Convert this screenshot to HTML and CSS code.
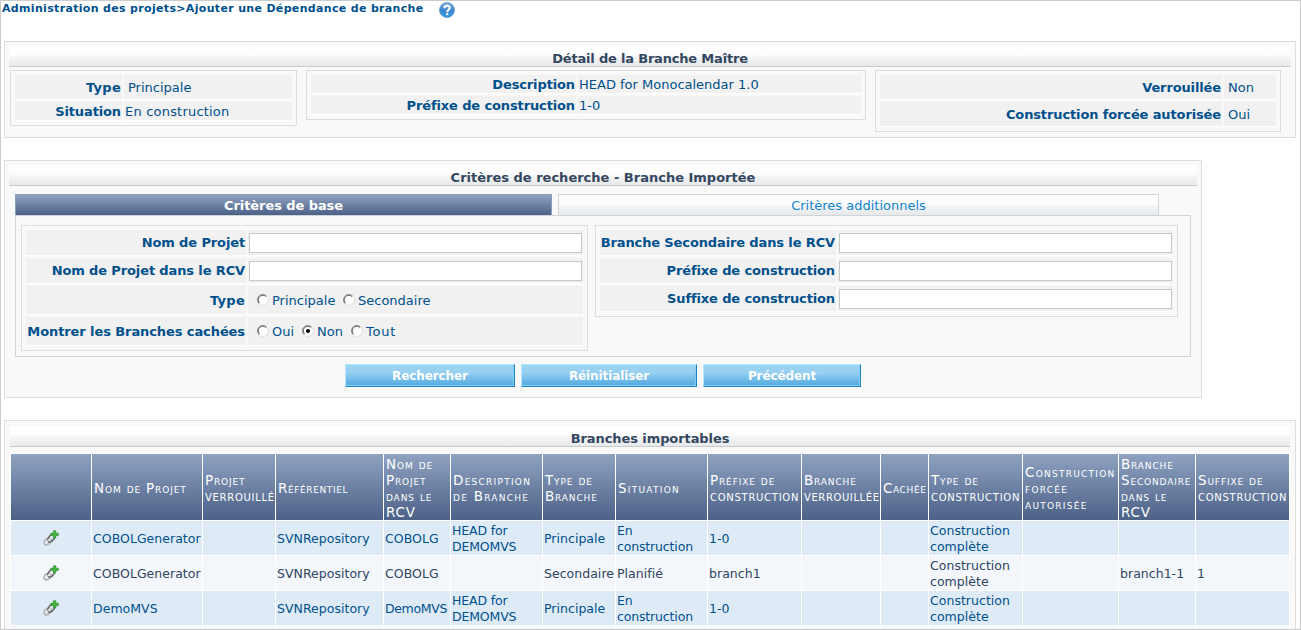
FILE: index.html
```html
<!DOCTYPE html>
<html lang="fr">
<head>
<meta charset="utf-8">
<title>Ajouter une Dépendance de branche</title>
<link rel="stylesheet" href="styles.css">
</head>
<body>
<svg class="defs" width="0" height="0">
  <defs>
    <linearGradient id="ball" x1="0" y1="0" x2="0" y2="1">
      <stop offset="0" stop-color="#86b6e2"/><stop offset=".5" stop-color="#3d86cc"/><stop offset="1" stop-color="#2fa0e4"/>
    </linearGradient>
    <symbol id="link-add" viewBox="0 0 16 16">
      <ellipse cx="4.600" cy="11.400" rx="4" ry="2.700" transform="rotate(-42 4.600 11.400)" fill="none" stroke="#b4b4b4" stroke-width="1.700"/>
      <ellipse cx="8.400" cy="8" rx="4.700" ry="2.600" transform="rotate(-55 8.400 8)" fill="none" stroke="#66686a" stroke-width="1.500"/>
      <path d="M4.400 11.400l3.600-4" stroke="#e6e6e6" stroke-width="1.200"/>
      <path d="M10.400.8h2.400v2.400h2.500v2.300h-2.500V8h-2.400V5.500H8V3.200h2.400z" fill="#48b53c" stroke="#2a9129" stroke-width=".7"/>
    </symbol>
    <symbol id="radio" viewBox="0 0 12 12">
      <circle cx="6" cy="6" r="5" fill="#fff"/>
      <path d="M9.700 2A5.300 5.300 0 0 0 2 9.700" fill="none" stroke="#8a8a8a" stroke-width=".9"/>
      <path d="M9 2.600A4.500 4.500 0 0 0 2.600 9" fill="none" stroke="#404040" stroke-width=".8"/>
      <path d="M9.900 2.200A5.300 5.300 0 0 1 2.200 9.900" fill="none" stroke="#dcdad5" stroke-width=".8"/>
    </symbol>
  </defs>
</svg>
<div class="frame">
  <div class="crumb">
    <span>Administration des projets&gt;Ajouter une Dépendance de branche</span>
    <svg width="16" height="16" viewBox="0 0 16 16"><circle cx="8" cy="8" r="7.500" fill="url(#ball)" stroke="#5b8fc4" stroke-width=".8"/><path d="M5.400 6.200c0-3.400 5.300-3.300 5.300-.3 0 1.900-2.500 2-2.500 4" fill="none" stroke="#fff" stroke-width="2"/><circle cx="8.200" cy="12" r="1.200" fill="#fff"/></svg>
  </div>

  <section class="panel detail">
    <h2>Détail de la Branche Maître</h2>
    <div class="boxes">
      <div class="box low d1">
        <b class="h25 type">Type</b><span class="in">Principale</span>
        <b class="h19">Situation</b><span class="wide">En construction</span>
      </div>
      <div class="box low d2">
        <b class="h19">Description</b><span>HEAD for Monocalendar 1.0</span>
        <b class="h19">Préfixe de construction</b><span>1-0</span>
      </div>
      <div class="box low d3">
        <b class="h25">Verrouillée</b><span class="in">Non</span>
        <b class="h25">Construction forcée autorisée</b><span class="in">Oui</span>
      </div>
    </div>
  </section>

  <section class="panel search">
    <h2 class="title-wide">Critères de recherche - Branche Importée</h2>
    <div class="tabs">
      <div class="tab active">Critères de base</div>
      <div class="tab">Critères additionnels</div>
    </div>
    <div class="pane">
      <div class="box f1">
        <b class="h26">Nom de Projet</b><span><input type="text"></span>
        <b class="h26">Nom de Projet dans le RCV</b><span><input type="text"></span>
        <b class="h29 type">Type</b>
        <span class="radios">
          <label class="w86"><svg width="12" height="12"><use href="#radio"/></svg>Principale</label>
          <label><svg width="12" height="12"><use href="#radio"/></svg>Secondaire</label>
        </span>
        <b class="h29 close">Montrer les Branches cachées</b>
        <span class="radios">
          <label class="w45"><svg width="12" height="12"><use href="#radio"/></svg>Oui</label>
          <label class="w49"><svg width="12" height="12"><use href="#radio"/><circle cx="6" cy="6" r="2" fill="#000"/></svg>Non</label>
          <label class="tout"><svg width="12" height="12"><use href="#radio"/></svg>Tout</label>
        </span>
      </div>
      <div class="box f2">
        <b class="h26">Branche Secondaire dans le RCV</b><span><input type="text"></span>
        <b class="h26">Préfixe de construction</b><span><input type="text"></span>
        <b class="h26">Suffixe de construction</b><span><input type="text"></span>
      </div>
    </div>
    <div class="buttons">
      <button class="w170">Rechercher</button>
      <button class="w176">Réinitialiser</button>
      <button class="w158">Précédent</button>
    </div>
  </section>

  <section class="panel results">
    <h2 class="title-mid">Branches importables</h2>
    <table>
      <colgroup><col class="c80"><col class="c110"><col class="c72"><col class="c107"><col class="c66"><col class="c91"><col class="c72"><col class="c91"><col class="c93"><col class="c78"><col class="c47"><col class="c93"><col class="c95"><col class="c76"><col class="c93"></colgroup>
      <thead>
        <tr>
          <th></th>
          <th>Nom de Projet</th>
          <th>Projet<br><i>verrouillé</i></th>
          <th class="tight">Référentiel</th>
          <th>Nom de<br>Projet<br>dans le<br>RCV</th>
          <th class="loose">Description<br>de Branche</th>
          <th>Type de<br>Branche</th>
          <th class="loose">Situation</th>
          <th>Préfixe de<br><i>construction</i></th>
          <th>Branche<br><i class="e">verrouillée</i></th>
          <th class="tight">Cachée</th>
          <th>Type de<br><i>construction</i></th>
          <th class="loose">Construction<br>forcée<br>autorisée</th>
          <th>Branche<br>Secondaire<br>dans le<br>RCV</th>
          <th>Suffixe de<br><i>construction</i></th>
        </tr>
      </thead>
      <tbody>
        <tr><td class="ico"><svg width="16" height="16"><use href="#link-add"/></svg></td><td>COBOLGenerator</td><td></td><td>SVNRepository</td><td>COBOLG</td><td class="snug">HEAD for<br>DEMOMVS</td><td>Principale</td><td class="snug">En<br>construction</td><td>1-0</td><td></td><td></td><td>Construction<br>complète</td><td></td><td></td><td></td></tr>
        <tr><td class="ico"><svg width="16" height="16"><use href="#link-add"/></svg></td><td>COBOLGenerator</td><td></td><td>SVNRepository</td><td>COBOLG</td><td></td><td>Secondaire</td><td>Planifié</td><td>branch1</td><td></td><td></td><td>Construction<br>complète</td><td></td><td>branch1-1</td><td>1</td></tr>
        <tr><td class="ico"><svg width="16" height="16"><use href="#link-add"/></svg></td><td>DemoMVS</td><td></td><td>SVNRepository</td><td class="mvs">DemoMVS</td><td class="snug">HEAD for<br>DEMOMVS</td><td>Principale</td><td class="snug">En<br>construction</td><td>1-0</td><td></td><td></td><td>Construction<br>complète</td><td></td><td></td><td></td></tr>
        <tr><td></td><td></td><td></td><td></td><td></td><td></td><td></td><td></td><td></td><td></td><td></td><td></td><td></td><td></td><td></td></tr>
      </tbody>
    </table>
  </section>
</div>
</body>
</html>
```

FILE: styles.css
```css
* { box-sizing: border-box; }
body { margin: 0; background: #fff; color: #00508c; font: 13px/16px Verdana, "DejaVu Sans", sans-serif; overflow: hidden; }
.defs { position: absolute; }
.frame { width: 1301px; height: 630px; border: 1px solid #ccc; padding-left: 3px; overflow: hidden; }

.crumb { display: flex; height: 40px; margin-left: -2px; gap: 15px; font-size: 11px; font-weight: bold; white-space: nowrap; }
.crumb span { width: 422px; letter-spacing: .33px; }
.crumb svg { margin-top: 1px; }

.panel { border: 1px solid #ddd; background: #f9f9f9; padding: 4px; }
.panel h2 { margin: 0; height: 21px; padding-top: 5px; border-bottom: 1px solid #c8cacd; background: linear-gradient(#fff 0, #fdfdfd 45%, #f3f4f6 58%, #e8e9eb 100%); color: #34475f; font-size: 13px; line-height: 16px; text-align: center; letter-spacing: -.19px; }
.panel h2.title-wide { letter-spacing: 0; }
.panel h2.title-mid { letter-spacing: -.08px; }

.detail { width: 1292px; height: 97px; }
.boxes { display: grid; grid-template-columns: 287px 560px 406px; column-gap: 9px; align-items: start; padding: 3px 0 0 1px; }
.box { display: grid; gap: 2px; padding: 4px; border: 1px solid #ddd; }
.box > * { display: flex; align-items: center; background: #f1f1f1; border-bottom: 1px solid #fff; white-space: nowrap; }
.box.low > *, .box > .h29, .box > .radios { padding-top: 2px; }
.box > b { justify-content: flex-end; padding-right: 1px; letter-spacing: -.125px; }
.box > .type { letter-spacing: .3px; }
.box > span { padding-left: 1px; }
.box > .in { padding-left: 4px; }
.box > .wide { letter-spacing: .2px; }
.box > .close { letter-spacing: -.09px; }
.h19 { height: 19px; }
.h25 { height: 25px; }
.h26 { height: 26px; }
.h29 { height: 29px; }
.d1 { grid-template-columns: 107px 168px; }
.d2 { grid-template-columns: 265px 283px; }
.d3 { grid-template-columns: 342px 52px; }

.search { width: 1198px; height: 238px; margin-top: 22px; }
.tabs { display: grid; grid-template-columns: 537px 601px; column-gap: 6px; height: 21px; margin: 8px 0 0 6px; }
.tab { height: 21px; border: 1px solid #d0d6d8; border-bottom: 0; background: linear-gradient(#fff 0, #fcfcfc 48%, #f2f3f5 60%, #e6e8ea 100%); color: #0f83cf; line-height: 21px; text-align: center; }
.tab.active { border-color: #8c9fbe; background: linear-gradient(#8fa2c1, #4b6186); color: #fff; font-weight: bold; letter-spacing: -.08px; }
.pane { display: flex; align-items: flex-start; gap: 7px; width: 1176px; height: 142px; margin-left: 6px; padding: 9px 5px; border: 1px solid #d0d6d8; }
.f1 { width: 567px; grid-template-columns: 220px 335px; }
.f2 { width: 583px; grid-template-columns: 236px 335px; }
input { width: 333px; height: 20px; padding: 0; border: 1px solid #c8c8c8; background: #fff; }
.box > .radios { padding-left: 9px; }
.radios label { display: flex; align-items: center; gap: 3px; }
.radios svg { margin-bottom: 2px; }
.w86 { width: 86px; }
.w45 { width: 45px; }
.w49 { width: 49px; }
.tout { letter-spacing: .8px; }

.buttons { display: flex; gap: 6px; padding: 7px 0 0 336px; }
button { height: 23px; padding: 1px 0 0; border: 1px solid; border-color: #b4e8fb #1d86c6 #1d86c6 #b4e8fb; box-shadow: inset -1px -1px #8accf0; background: linear-gradient(#9dd3f2 0, #97d0f1 35%, #50a9df 100%); color: #fff; font: bold 12px/16px Verdana, "DejaVu Sans", sans-serif; letter-spacing: -.1px; }
.w170 { width: 170px; }
.w176 { width: 176px; }
.w158 { width: 158px; }

.results { width: 1292px; height: 240px; margin-top: 22px; padding: 5px 4px 0 5px; }
.results h2 { width: 1280px; }
table { width: 1280px; margin-top: 6px; table-layout: fixed; border-spacing: 1px; background: #fff; }
th, td { padding: 2px 0 0 1px; text-align: left; vertical-align: middle; white-space: nowrap; }
th { height: 66px; padding: 1px 0 0 2px; background: linear-gradient(#8fa2c1, #4b6186); color: #fff; font-size: 13.5px; font-weight: normal; font-variant: small-caps; letter-spacing: .85px; }
th i { font-size: 14.5px; font-style: normal; line-height: 14px; letter-spacing: .72px; }
th i.e { letter-spacing: .6px; }
th.tight { letter-spacing: .6px; }
th.loose { letter-spacing: 1.25px; }
td { height: 34px; font-size: 12.5px; letter-spacing: .03px; }
td.snug { letter-spacing: -.15px; }
td.mvs { letter-spacing: -.35px; }
td.ico { padding: 0; text-align: center; }
.ico svg { display: block; margin: 0 auto; }
tbody tr:nth-child(odd) { background: #deebf6; }
tbody tr:nth-child(even) { background: #f3f6fb; color: #2f4560; }
.c80 { width: 80px; }
.c110 { width: 110px; }
.c72 { width: 72px; }
.c107 { width: 107px; }
.c66 { width: 66px; }
.c91 { width: 91px; }
.c93 { width: 93px; }
.c78 { width: 78px; }
.c47 { width: 47px; }
.c95 { width: 95px; }
.c76 { width: 76px; }
```
